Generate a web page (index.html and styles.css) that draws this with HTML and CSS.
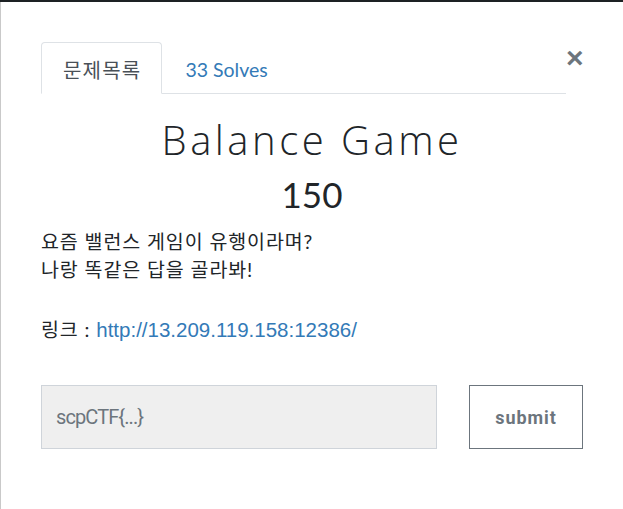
FILE: index.html
```html
<!DOCTYPE html>
<html lang="ko">
<head>
<meta charset="utf-8">
<title>Balance Game</title>
<link rel="stylesheet" href="styles.css">
</head>
<body>
<div class="backdrop-strip"></div>
<div class="modal">
  <div class="modal-head">
    <ul class="tabs">
      <li class="tab active">문제목록</li>
      <li class="tab link">33 Solves</li>
    </ul>
    <button class="close" type="button" aria-label="Close">&times;</button>
  </div>
  <h2 class="title">Balance Game</h2>
  <h3 class="value">150</h3>
  <div class="desc">
    <p>요즘 밸런스 게임이 유행이라며?<br>나랑 똑같은 답을 골라봐!</p>
    <p>링크 : <a href="#">http://13.209.119.158:12386/</a></p>
  </div>
  <form class="submit-row">
    <input class="flag" type="text" placeholder="scpCTF{...}">
    <button class="submit" type="button">submit</button>
  </form>
</div>
</body>
</html>
```
FILE: styles.css
```css
html, body {
  margin: 0;
  padding: 0;
  background: #fff;
  height: 100%;
}
body {
  font-family: "Lato", "Noto Sans CJK KR", sans-serif;
  color: #212529;
  display: flex;
  flex-direction: column;
}
.backdrop-strip {
  height: 2px;
  background: #1d2124;
  flex: none;
}
.modal {
  flex: 1;
  border-left: 1px solid #c9c9c9;
  padding: 40px 40px 0 40px;
}
.modal-head {
  display: flex;
  align-items: flex-start;
}
.tabs {
  flex: 1;
  display: flex;
  list-style: none;
  margin: 0;
  padding: 0;
  border-bottom: 1px solid #dee2e6;
}
.tab {
  height: 50px;
  line-height: 54px;
  padding: 0 21px 0 21px;
  border: 1px solid transparent;
  border-radius: 4px 4px 0 0;
  margin-bottom: -1px;
}
.tab.active {
  color: #495057;
  border-color: #dee2e6 #dee2e6 #fff;
  font-family: "Noto Sans CJK KR", sans-serif;
  font-size: 20px;
  letter-spacing: 1.2px;
  padding-right: 20px;
}
.tab.link {
  color: #337ab7;
  font-size: 19.5px;
  padding-left: 22px;
}
.close {
  border: 0;
  background: none;
  padding: 0;
  width: 17px;
  margin-top: 2px;
  font-family: "Liberation Sans", sans-serif;
  font-size: 30px;
  line-height: 28px;
  font-weight: bold;
  color: #6c757d;
  text-align: center;
}
.title {
  margin: 22px 0 0;
  text-align: center;
  font-family: "Open Sans", sans-serif;
  font-weight: 300;
  font-size: 40px;
  letter-spacing: 3.5px;
  line-height: 48px;
  color: #212529;
}
.value {
  margin: 10px 0 0;
  text-align: center;
  font-weight: 400;
  font-size: 35px;
  line-height: 40px;
}
.desc {
  margin-top: 14px;
  font-size: 19.5px;
  line-height: 28px;
  letter-spacing: 0.9px;
}
.desc p {
  margin: 0 0 32px;
}
.desc p:last-child {
  margin-bottom: 0;
}
.desc a {
  color: #337ab7;
  text-decoration: none;
  font-family: "Liberation Sans", sans-serif;
  font-size: 20.5px;
  letter-spacing: 0;
}
.submit-row {
  display: flex;
  gap: 32px;
  margin-top: 41px;
}
.flag {
  flex: 1;
  box-sizing: border-box;
  height: 64px;
  margin: 0;
  background: #efefef;
  border: 1px solid #cfd4da;
  padding: 0 14px;
  font-family: "Roboto", sans-serif;
  font-size: 20px;
  letter-spacing: -0.9px;
  color: #6c757d;
}
.flag::placeholder {
  color: #6c757d;
}
.submit {
  width: 114px;
  height: 64px;
  box-sizing: border-box;
  background: #fff;
  border: 1px solid #6c757d;
  font-family: "Roboto", sans-serif;
  font-weight: bold;
  font-size: 18px;
  letter-spacing: 0.9px;
  color: #6c757d;
}
```
